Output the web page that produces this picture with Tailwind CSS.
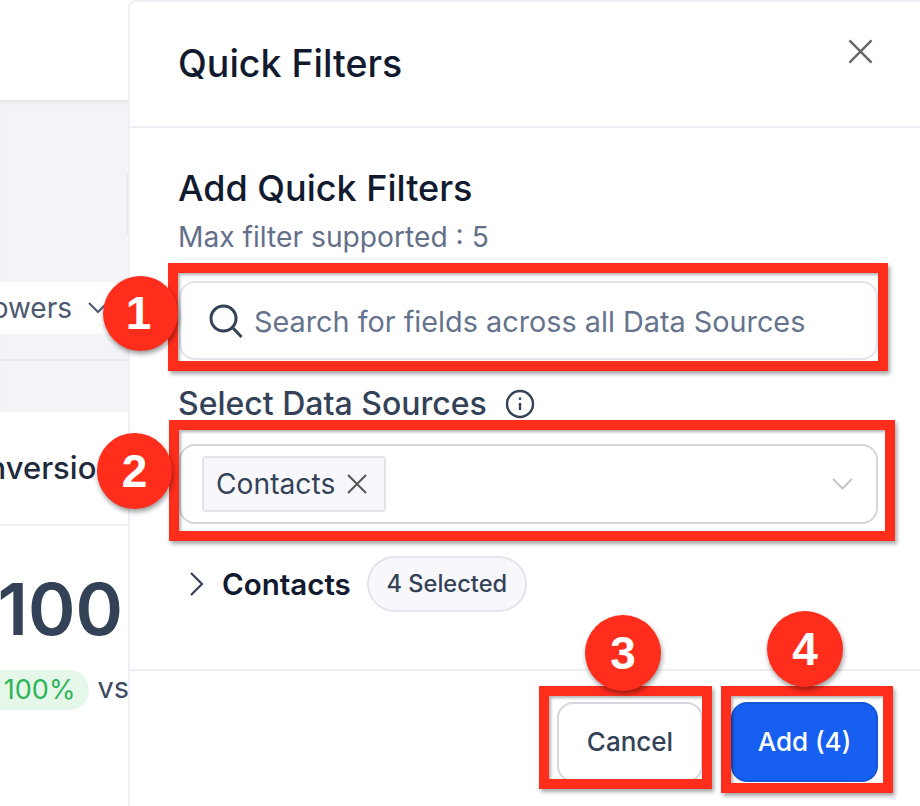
<!DOCTYPE html>
<html lang="en">
  <head>
    <meta charset="UTF-8" />
    <title>Quick Filters</title>
    <script src="https://cdn.jsdelivr.net/npm/@tailwindcss/browser@4"></script>
  </head>
  <body class="bg-white">
    <div class="relative flex w-[920px] h-[806px] overflow-hidden bg-white font-['Inter',sans-serif]">
      <!-- page behind the drawer -->
      <div class="w-[129px] shrink-0 flex flex-col overflow-hidden">
        <div class="h-[100px] shrink-0 bg-white"></div>
        <div class="h-[312px] shrink-0 bg-[#f3f4f8] shadow-[inset_0_4px_4px_-2px_rgba(0,0,0,0.07)] flex flex-col">
          <div class="h-[73px] shrink-0 "></div>
          <div class="h-[62px] w-[3px] ml-[126px] shrink-0 rounded-l-md border-l-2 border-y-2 border-[#e9eaf0] bg-white"></div>
          <div class="h-[47px] shrink-0"></div>
          <div class="h-[52px] w-[118px] shrink-0 bg-white rounded-r-lg flex items-center justify-end gap-[16px] overflow-hidden">
            <span class="text-[28px] text-[#4b5870] whitespace-nowrap">owers</span>
            <svg class="w-[20px] h-[12px] shrink-0 mr-[10px]" viewBox="0 0 20 12" fill="none" stroke="#4b5870" stroke-width="2"><path d="M1 1l9 9 9-9" /></svg>
          </div>
          <div class="h-[27px] shrink-0 border-b-2 border-[#e9eaf0]"></div>
        </div>
        <div class="h-[114px] shrink-0 bg-white border-b-2 border-[#eeeef3] flex items-center justify-end overflow-hidden">
          <span class="text-[31px] font-medium text-[#1f2a3d] whitespace-nowrap mr-[14px] mt-[1px]">nversion</span>
        </div>
        <div class="flex-1 bg-white flex flex-col items-end overflow-hidden">
          <div class="mt-[42px] mr-[6px] text-[72px] leading-[82px] font-semibold text-[#344258]">100</div>
          <div class="mt-[16px] flex items-center justify-end w-full">
            <span class="h-[40px] w-[91px] shrink-0 rounded-r-[20px] bg-[#e5f7e9] text-[#2fb457] text-[27px] flex items-center justify-end pr-[14px]">100%</span>
            <span class="ml-[8px] text-[29px] text-[#3c4960] mb-[4px]">vs</span>
          </div>
        </div>
      </div>

      <!-- drawer -->
      <div class="flex-1 flex flex-col bg-white border-l-2 border-t-2 border-[#eeeef4] rounded-tl-lg ml-[-1px] z-10">
        <div class="h-[126px] shrink-0 pl-[48px] pr-[46px] flex items-center justify-between border-b-2 border-[#eeeef4]">
          <h1 class="text-[37.5px] font-medium text-[#111a2e]">Quick Filters</h1>
          <svg class="w-[25px] h-[25px] mb-[25px] mr-[1px]" viewBox="0 0 26 26" fill="none" stroke="#666" stroke-width="2.5"><path d="M1.5 1.5l23 23M24.5 1.5l-23 23" /></svg>
        </div>
        <div class="flex-1 pl-[48px] pr-[42px] flex flex-col">
          <h2 class="mt-[38px] text-[36px] leading-[44px] font-medium text-[#111a2e]">Add Quick Filters</h2>
          <p class="mt-[9px] text-[28.2px] leading-[36px] text-[#64708a]">Max filter supported : 5</p>
          <div class="mt-[26px] ml-[1px] h-[79px] shrink-0 rounded-2xl border-2 border-[#e3e4ea] flex items-center pl-[28px] gap-[11px]">
            <svg class="w-[34px] h-[34px] shrink-0" viewBox="0 0 34 34" fill="none" stroke="#344258" stroke-width="3"><circle cx="14.5" cy="14.5" r="12.5" /><path d="M23.5 23.5l9 9.5" /></svg>
            <span class="text-[28.8px] text-[#66738c] whitespace-nowrap mt-[2px]">Search for fields across all Data Sources</span>
          </div>
          <div class="mt-[23px] flex items-center gap-[18px]">
            <span class="text-[32px] leading-[40px] font-medium text-[#344258] mt-[1px]">Select Data Sources</span>
            <svg class="w-[30px] h-[30px]" viewBox="0 0 30 30" fill="none" stroke="#344258" stroke-width="2.4"><circle cx="15" cy="15" r="13" /><path d="M15 14v7" /><path d="M15 8.5v2.4" /></svg>
          </div>
          <div class="mt-[20px] ml-[1px] h-[80px] shrink-0 rounded-2xl border-2 border-[#d3d6df] flex items-center justify-between pl-[21px] pr-[23px]">
            <span class="h-[56px] w-[184px] rounded bg-[#f8f8fc] border-2 border-[#e3e4ea] flex items-center pl-[13px] gap-[12px]">
              <span class="text-[28.2px] text-[#344258] ml-[-1px] mt-[1px]">Contacts</span>
              <svg class="w-[20px] h-[20px] shrink-0" viewBox="0 0 20 20" fill="none" stroke="#555" stroke-width="2"><path d="M1 1l18 18M19 1L1 19" /></svg>
            </span>
            <svg class="w-[21px] h-[12px] shrink-0" viewBox="0 0 21 12" fill="none" stroke="#c3c6ce" stroke-width="2"><path d="M1 1l9.5 9.5L20 1" /></svg>
          </div>
          <div class="mt-[32px] flex items-center">
            <svg class="ml-[11px] w-[15px] h-[24px] shrink-0" viewBox="0 0 15 24" fill="none" stroke="#344258" stroke-width="2.2"><path d="M2 1l11 11L2 23" /></svg>
            <span class="ml-[18px] text-[29.5px] font-semibold text-[#111a2e]">Contacts</span>
            <span class="ml-[16px] h-[56px] w-[160px] rounded-[28px] bg-[#f8f8fc] border-2 border-[#e3e4ea] flex items-center justify-center text-[23.6px] font-medium text-[#344258]">4 Selected</span>
          </div>
        </div>
        <div class="h-[137px] shrink-0 border-t-2 border-[#eeeef4] pt-[31px] pr-[42px] flex justify-end gap-[28px]">
          <button class="h-[80px] w-[146px] rounded-2xl border-2 border-[#d3d6df] bg-white text-[26px] font-medium text-[#344258] pb-[2px]">Cancel</button>
          <button class="h-[80px] w-[147px] rounded-2xl border-2 border-[#1456d8] bg-[#175ff0] text-[26px] font-medium text-white pb-[2px]">Add (4)</button>
        </div>
      </div>

      <!-- red callouts drawn over the screenshot -->
      <div class="absolute z-20 left-[168px] top-[263px] w-[720px] h-[108px] border-[10px] border-[#ff2d1c] shadow-[2px_3px_4px_rgba(0,0,0,0.35),inset_2px_2px_3px_rgba(0,0,0,0.3)]"></div>
      <div class="absolute z-20 left-[169px] top-[420px] w-[726px] h-[121px] border-[10px] border-[#ff2d1c] shadow-[2px_3px_4px_rgba(0,0,0,0.35),inset_2px_2px_3px_rgba(0,0,0,0.3)]"></div>
      <div class="absolute z-20 left-[539px] top-[686px] w-[173px] h-[103px] border-[10px] border-[#ff2d1c] shadow-[2px_3px_4px_rgba(0,0,0,0.35),inset_2px_2px_3px_rgba(0,0,0,0.3)]"></div>
      <div class="absolute z-20 left-[721px] top-[686px] w-[172px] h-[107px] border-[10px] border-[#ff2d1c] shadow-[2px_3px_4px_rgba(0,0,0,0.35),inset_2px_2px_3px_rgba(0,0,0,0.3)]"></div>
      <div class="absolute z-20 left-[103px] top-[276px] w-[75px] h-[75px] rounded-full bg-[#ff2d1c] shadow-[1px_3px_5px_rgba(0,0,0,0.4)] flex items-center justify-center text-white text-[46px] font-bold font-['Liberation_Sans',sans-serif] pr-[4px]">1</div>
      <div class="absolute z-20 left-[97px] top-[433px] w-[75px] h-[76px] rounded-full bg-[#ff2d1c] shadow-[1px_3px_5px_rgba(0,0,0,0.4)] flex items-center justify-center text-white text-[46px] font-bold font-['Liberation_Sans',sans-serif]">2</div>
      <div class="absolute z-20 left-[585px] top-[615px] w-[76px] h-[76px] rounded-full bg-[#ff2d1c] shadow-[1px_3px_5px_rgba(0,0,0,0.4)] flex items-center justify-center text-white text-[46px] font-bold font-['Liberation_Sans',sans-serif]">3</div>
      <div class="absolute z-20 left-[767px] top-[611px] w-[76px] h-[76px] rounded-full bg-[#ff2d1c] shadow-[1px_3px_5px_rgba(0,0,0,0.4)] flex items-center justify-center text-white text-[46px] font-bold font-['Liberation_Sans',sans-serif]">4</div>
    </div>
  </body>
</html>
